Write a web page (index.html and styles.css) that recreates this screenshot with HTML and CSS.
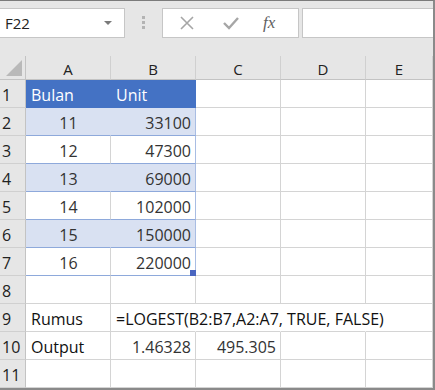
FILE: index.html
```html
<!DOCTYPE html>
<html lang="id">

<head>
    <meta charset="UTF-8">
    <title>LOGEST</title>
    <link rel="stylesheet" href="styles.css">
</head>

<body>
    <div class="window">
        <div class="toolbar">
            <div class="namebox">
                <span>F22</span>
                <span class="caret"></span>
            </div>
            <div class="grip"><i></i><i></i><i></i></div>
            <div class="fxbuttons">
                <svg class="ico" width="16" height="16" viewBox="0 0 16 16">
                    <path d="M2 2 L14 14 M14 2 L2 14" stroke="#a6a6a6" stroke-width="1.6" fill="none" />
                </svg>
                <svg class="ico" width="18" height="16" viewBox="0 0 18 16">
                    <path d="M2 8 L7 13 L16 3" stroke="#a6a6a6" stroke-width="2.4" fill="none" />
                </svg>
                <span class="fx">fx</span>
            </div>
            <div class="formula"></div>
        </div>

        <div class="sheet">
            <!-- header -->
            <div class="hd corner"><span class="tri"></span></div>
            <div class="hd">A</div>
            <div class="hd">B</div>
            <div class="hd">C</div>
            <div class="hd">D</div>
            <div class="hd">E</div>

            <div class="rh">1</div>
            <div class="c t-head">Bulan</div>
            <div class="c t-head t-end">Unit</div>
            <div class="c"></div>
            <div class="c"></div>
            <div class="c"></div>

            <div class="rh">2</div>
            <div class="c t-band mid">11</div>
            <div class="c t-band t-end num">33100</div>
            <div class="c"></div>
            <div class="c"></div>
            <div class="c"></div>

            <div class="rh">3</div>
            <div class="c t-row mid">12</div>
            <div class="c t-row t-end num">47300</div>
            <div class="c"></div>
            <div class="c"></div>
            <div class="c"></div>

            <div class="rh">4</div>
            <div class="c t-band mid">13</div>
            <div class="c t-band t-end num">69000</div>
            <div class="c"></div>
            <div class="c"></div>
            <div class="c"></div>

            <div class="rh">5</div>
            <div class="c t-row mid">14</div>
            <div class="c t-row t-end num">102000</div>
            <div class="c"></div>
            <div class="c"></div>
            <div class="c"></div>

            <div class="rh">6</div>
            <div class="c t-band mid">15</div>
            <div class="c t-band t-end num">150000</div>
            <div class="c"></div>
            <div class="c"></div>
            <div class="c"></div>

            <div class="rh">7</div>
            <div class="c t-row mid">16</div>
            <div class="c t-row t-end num handle">220000</div>
            <div class="c"></div>
            <div class="c"></div>
            <div class="c"></div>

            <div class="rh">8</div>
            <div class="c"></div>
            <div class="c"></div>
            <div class="c"></div>
            <div class="c"></div>
            <div class="c"></div>

            <div class="rh">9</div>
            <div class="c">Rumus</div>
            <div class="c spill"><span>=LOGEST(B2:B7,A2:A7, TRUE, FALSE)</span></div>
            <div class="c spilled"></div>
            <div class="c spilled"></div>
            <div class="c"></div>

            <div class="rh">10</div>
            <div class="c">Output</div>
            <div class="c num">1.46328</div>
            <div class="c num">495.305</div>
            <div class="c"></div>
            <div class="c"></div>

            <div class="rh">11</div>
            <div class="c"></div>
            <div class="c"></div>
            <div class="c"></div>
            <div class="c"></div>
            <div class="c"></div>
        </div>
    </div>
</body>

</html>
```

FILE: styles.css
```css
body {
    margin: 0;
    font-family: 'Open Sans', 'Noto Sans', sans-serif;
    background: #fff;
}

.window {
    width: 435px;
    height: 390px;
    box-sizing: border-box;
    border-top: 1px solid #7b7b7b;
    border-right: 2px solid #8a8a8a;
    border-bottom: 2px solid #8a8a8a;
    background: #e6e6e6;
    overflow: hidden;
}

/* formula bar */
.toolbar {
    display: flex;
    align-items: center;
    height: 55px;
}

.namebox {
    box-sizing: border-box;
    width: 127px;
    height: 30px;
    margin-left: -2px;
    margin-top: -12px;
    background: #fff;
    border: 1px solid #c6c6c6;
    display: flex;
    align-items: center;
    justify-content: space-between;
    padding: 0 12px 0 6px;
    font-size: 15px;
    color: #222;
}

.caret {
    width: 0;
    height: 0;
    border-left: 4px solid transparent;
    border-right: 4px solid transparent;
    border-top: 4px solid #7a7a7a;
}

.grip {
    display: flex;
    flex-direction: column;
    gap: 2px;
    margin-left: 17px;
    margin-top: -12px;
}

.grip i {
    display: block;
    width: 3px;
    height: 3px;
    background: #b3b3b3;
}

.fxbuttons {
    box-sizing: border-box;
    width: 137px;
    height: 30px;
    margin-left: 17px;
    margin-top: -12px;
    background: #fff;
    border: 1px solid #c6c6c6;
    display: flex;
    align-items: center;
    padding-left: 16px;
    gap: 27px;
}

.fx {
    font-family: 'Liberation Serif', serif;
    font-style: italic;
    font-size: 17px;
    color: #5f5f5f;
    margin-left: -4px;
}

.formula {
    box-sizing: border-box;
    flex: 1;
    height: 30px;
    margin-left: 3px;
    margin-right: -4px;
    margin-top: -12px;
    background: #fff;
    border: 1px solid #c6c6c6;
}

/* grid */
.sheet {
    display: grid;
    grid-template-columns: 26px 85px 85px 85px 85px 1fr;
    grid-template-rows: 24px repeat(11, 28px);
    background: #fff;
}

.sheet > div {
    box-sizing: border-box;
    display: flex;
    align-items: center;
    white-space: nowrap;
}

.hd {
    background: #e6e6e6;
    border-right: 1px solid #d0d0d0;
    border-bottom: 1px solid #c3c3c3;
    justify-content: center;
    font-size: 15px;
    color: #222;
    padding-top: 2px;
}

.corner {
    position: relative;
    border-right-color: #c3c3c3;
}

.tri {
    position: absolute;
    right: 3px;
    bottom: 3px;
    width: 0;
    height: 0;
    border-left: 16px solid transparent;
    border-bottom: 16px solid #b9b9b9;
}

.rh {
    background: #e6e6e6;
    border-right: 1px solid #c3c3c3;
    border-bottom: 1px solid #d0d0d0;
    font-size: 16px;
    color: #222;
    padding-left: 2px;
    padding-top: 2px;
}

.c {
    border-right: 1px solid #d4d4d4;
    border-bottom: 1px solid #d4d4d4;
    font-size: 16px;
    color: #111;
    padding: 2px 4px 0 5px;
}

.c.mid {
    justify-content: center;
}

.c.num {
    justify-content: flex-end;
    color: #333;
}

.t-head {
    background: #4472c4;
    color: #fff;
    border-right-color: #4472c4;
    border-bottom-color: #4472c4;
}

.t-band {
    background: #d9e1f2;
    border-right-color: #d9e1f2;
    border-bottom-color: #8ea9db;
    color: #333;
}

.t-row {
    background: #fff;
    border-bottom-color: #8ea9db;
    color: #333;
}

.c.t-end {
    border-right-color: #a9bde3;
}

.c.t-head.t-end {
    border-right-color: #4472c4;
}

.handle {
    position: relative;
}

.handle::after {
    content: "";
    position: absolute;
    right: -1px;
    bottom: -1px;
    width: 6px;
    height: 6px;
    background: #4a66c0;
}

/* text running over into the next cells hides their gridlines */
.spill {
    overflow: visible;
    position: relative;
    z-index: 1;
    border-right-color: #fff !important;
}

.spilled {
    border-right-color: #fff !important;
}

.spill span {
    color: #111;
}
```
